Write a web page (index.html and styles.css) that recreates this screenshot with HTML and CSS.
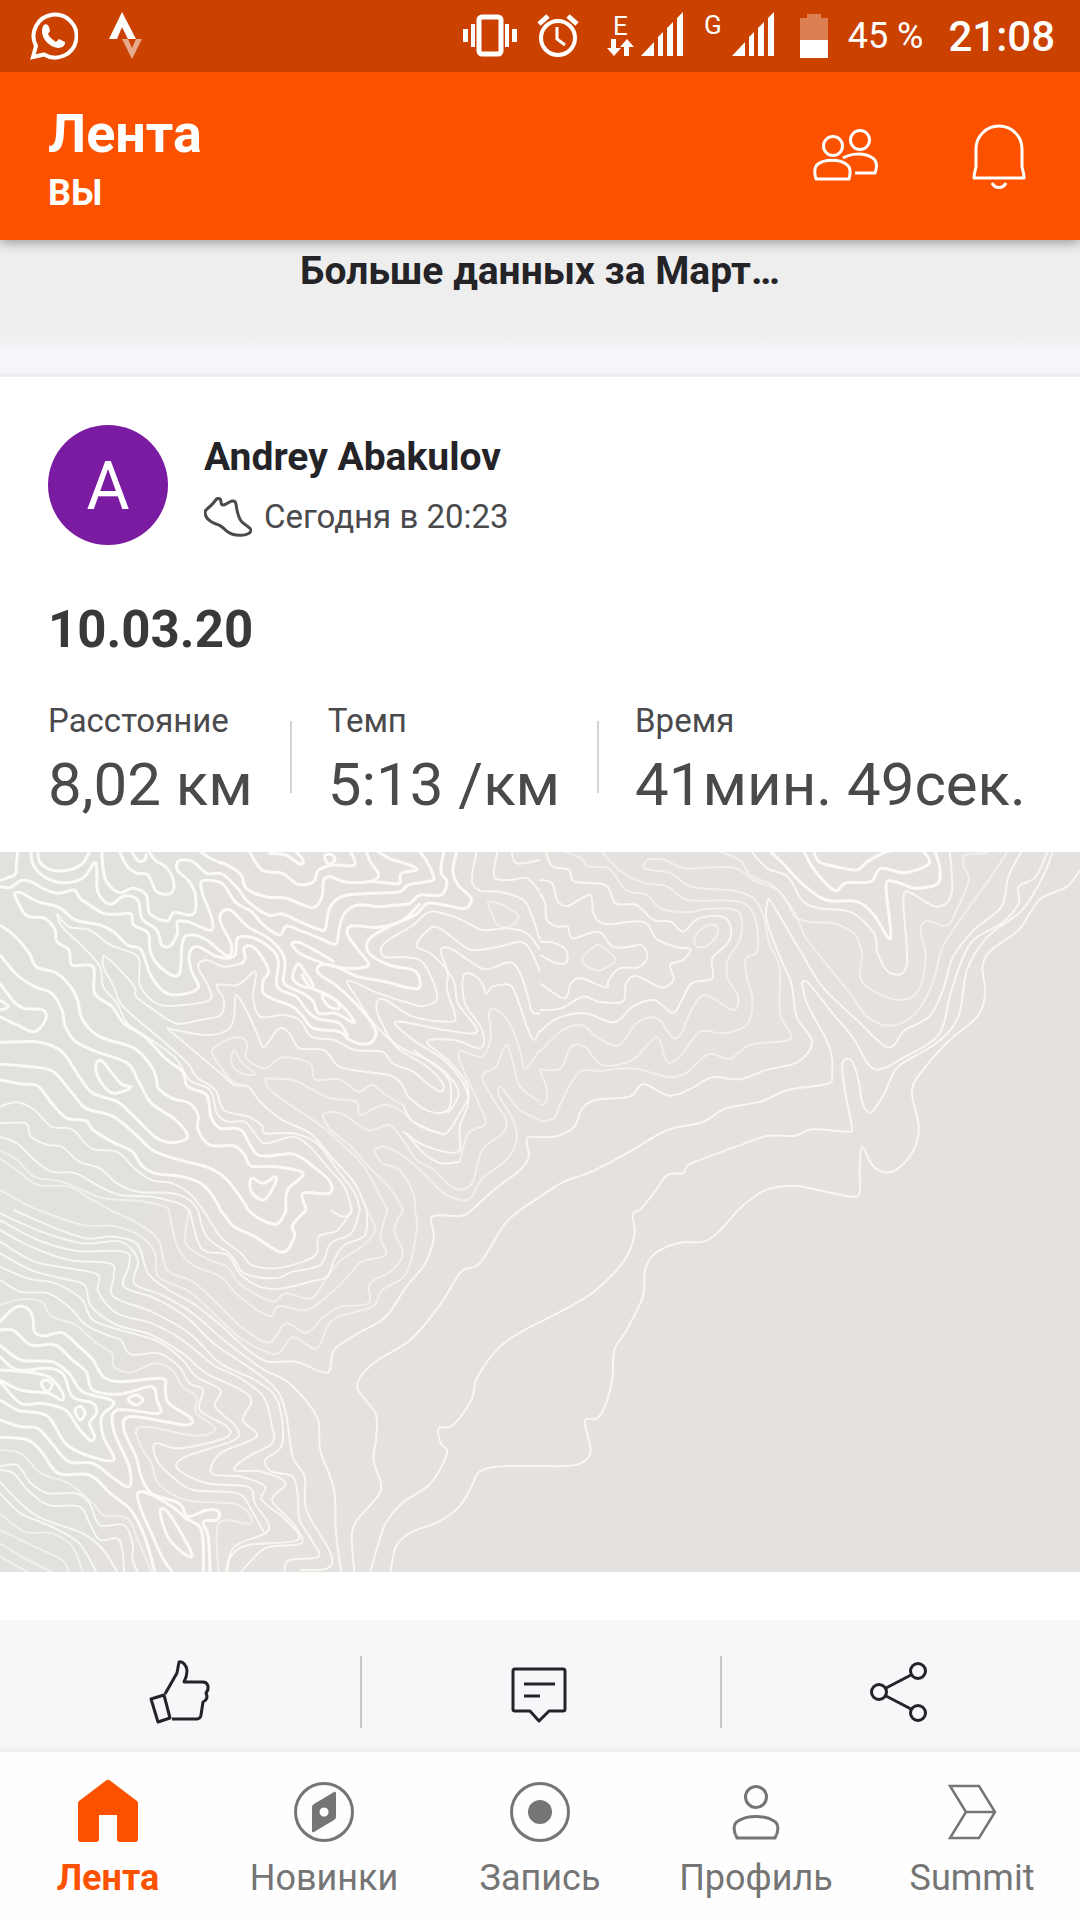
FILE: index.html
```html
<!DOCTYPE html>
<html lang="ru">
<head>
<meta charset="utf-8">
<meta name="viewport" content="width=device-width, initial-scale=1">
<title>Лента</title>
<link rel="stylesheet" href="styles.css">
</head>
<body>
<div class="status-bar">
  <div class="status-group status-apps">
    <svg width="48" height="48" viewBox="0 0 48 48" fill="none" aria-hidden="true">
      <path d="M3 45l3-11A21.500 21.500 0 1 1 14 42.500z" stroke="#fff" stroke-width="4"/>
      <path d="M13 14c2-3 5-2 6 1l1 4-2 3c2 4 5 6 8 8l3-3 6 3c1 3-3 6-7 6-9-1-17-10-16-18z" fill="#fff"/>
    </svg>
    <svg width="34" height="48" viewBox="0 0 34 48" aria-hidden="true">
      <path d="M0 27L13 0l14 27h-8l-6-12-5 12z" fill="#fff"/>
      <path d="M13 27h6l4 9 4-9h6L23 47z" fill="#fff" opacity=".55"/>
    </svg>
  </div>
  <div class="status-group">
    <svg width="54" height="48" viewBox="0 0 54 48" aria-hidden="true">
      <rect x="16" y="5" width="22" height="37" rx="3" fill="none" stroke="#fff" stroke-width="5"/>
      <path d="M0 17h5v13H0zM8 12h4v23H8zM42 12h4v23h-4zM49 17h5v13h-5z" fill="#fff"/>
    </svg>
    <svg width="50" height="48" viewBox="0 0 50 48" fill="none" stroke="#fff" stroke-width="4" aria-hidden="true">
      <circle cx="21" cy="26" r="17"/>
      <path d="M20 15v12l8 6" stroke-width="3"/>
      <path d="M2 12l9-8M40 12l-9-8" stroke-width="5"/>
    </svg>
    <svg width="77" height="72" viewBox="0 -12 77 72" fill="#fff" aria-hidden="true">
      <text class="network" x="6" y="23">E</text>
      <path d="M4 27h5v9h5l-7 8-7-8h4zM17 44h5V35h5l-7-8-7 8h4z"/>
      <path d="M34 44L47 30v14zM51 25l5-5v24h-5zM60 16l6-6v34h-6zM70 6l6-6v44h-6z"/>
    </svg>
    <svg width="76" height="72" viewBox="0 -12 76 72" fill="#fff" aria-hidden="true">
      <text class="network" x="0" y="22">G</text>
      <path d="M28 44L41 30v14zM45 25l5-5v24h-5zM54 16l6-6v34h-6zM64 6l6-6v44h-6z"/>
    </svg>
    <svg width="28" height="48" viewBox="0 0 28 48" fill="#fff" aria-hidden="true">
      <path d="M0 6h7V2h14v4h7v22H0z" opacity=".33"/>
      <path d="M0 28h28v18H0z"/>
    </svg>
    <span class="battery">45 %</span>
    <span class="clock">21:08</span>
  </div>
</div>

<header class="app-header">
  <div class="app-heading">
    <h1 class="app-title">Лента</h1>
    <p class="app-subtitle">ВЫ</p>
  </div>
  <div class="header-actions">
    <button class="icon-button" type="button" aria-label="Друзья">
      <svg width="66" height="72" viewBox="0 0 66 72" fill="none" stroke="#fff" stroke-width="3">
        <ellipse cx="20" cy="25" rx="9.500" ry="9.500"/>
        <ellipse cx="47" cy="19" rx="9.500" ry="9.500"/>
        <path d="M3 58c-2-7-2-12 2-15 7-5 21-5 28 0 5 3 5 8 3 15z" stroke-linejoin="round"/>
        <path d="M30 37c8-5 21-5 28-1 6 3 7 8 4 16H42"/>
      </svg>
    </button>
    <button class="icon-button" type="button" aria-label="Уведомления">
      <svg width="54" height="72" viewBox="0 0 54 72" fill="none" stroke="#fff" stroke-width="3">
        <path d="M4 46V28a23 23 0 0 1 46 0v18c1 4 2 7 2 11H2c0-4 1-7 2-11z" stroke-linejoin="round"/>
        <path d="M20 62c3 6 11 6 14 0"/>
      </svg>
    </button>
  </div>
</header>

<main class="feed">
  <div class="more">Больше данных за Март…</div>
  <article class="activity">
    <div class="activity-body">
      <div class="athlete">
        <div class="avatar">А</div>
        <div class="athlete-text">
          <h2 class="athlete-name">Andrey Abakulov</h2>
          <p class="athlete-time">
            <svg width="48" height="40" viewBox="0 0 48 40" fill="none" stroke="#4a4a4d" stroke-width="3" stroke-linejoin="round" aria-hidden="true">
              <path d="M11 4c2-4 6-3 6 1 0 3 2 4 5 2 5-3 9-5 10 0 1 8 2 14 6 18 4 4 10 6 9 9-2 5-16 6-23 1-5-4-7-7-12-8-8-3-11-8-11-12 0-3 4-3 10-11z"/>
            </svg>
            <span>Сегодня в 20:23</span>
          </p>
        </div>
      </div>
      <h3 class="activity-title">10.03.20</h3>
      <dl class="stats">
        <div class="stat"><dt>Расстояние</dt><dd>8,02 км</dd></div>
        <div class="stat"><dt>Темп</dt><dd>5:13 /км</dd></div>
        <div class="stat"><dt>Время</dt><dd>41мин. 49сек.</dd></div>
      </dl>
    </div>
    <svg class="map" viewBox="0 0 1080 720" preserveAspectRatio="xMidYMid slice" role="img" aria-label="Карта">
      <g data-sheet="northWest" transform="translate(0 -2) scale(.34439 .33333)"></g>
      <g data-sheet="northEast" transform="translate(540 -2) scale(.34439 .33333)"></g>
      <g data-sheet="southWest" transform="translate(0 358) scale(.34439 .33333)"></g>
      <g data-sheet="coast" transform="translate(300 248) scale(.40816 .33333)"></g>
    </svg>
    <div class="actions">
      <button class="action" type="button" aria-label="Нравится">
        <svg width="64" height="72" viewBox="0 0 64 72" fill="none" stroke="#242428" stroke-width="3" stroke-linejoin="round">
          <path d="M17 38l12-21 2-11c4-1 8 4 8 9 0 4-1 7-3 11h19c5 0 7 6 3 11 2 4 1 7-3 9l-2 13c0 2-2 4-4 4H24"/>
          <path d="M3 43l13-4 6 23-12 4z"/>
        </svg>
      </button>
      <button class="action" type="button" aria-label="Комментировать">
        <svg width="64" height="72" viewBox="0 0 64 72" fill="none" stroke="#242428" stroke-width="3" stroke-linejoin="round">
          <path d="M7 13h48a2 2 0 0 1 2 2v38a2 2 0 0 1-2 2H41L31 65 22 55H7a2 2 0 0 1-2-2V15a2 2 0 0 1 2-2z"/>
          <path d="M16 28h31M16 40h16"/>
        </svg>
      </button>
      <button class="action" type="button" aria-label="Поделиться">
        <svg width="64" height="72" viewBox="0 0 64 72" fill="none" stroke="#242428" stroke-width="3">
          <circle cx="11" cy="36" r="7.500"/><circle cx="50" cy="15" r="7.500"/><circle cx="50" cy="57" r="7.500"/>
          <path d="M18 32l25-13M18 40l25 13"/>
        </svg>
      </button>
    </div>
  </article>
</main>

<nav class="tabs">
  <a class="tab tab-current" href="#feed" aria-current="page">
    <svg width="64" height="64" viewBox="0 0 64 64" fill="#fc5200" aria-hidden="true">
      <path d="M30 1.500q2-1.500 4 0L61 22q1 1 1 2v36q0 3-3 3H44q-3 0-3-3V36H23v24q0 3-3 3H5q-3 0-3-3V24q0-1 1-2z"/>
    </svg>
    Лента
  </a>
  <a class="tab" href="#explore">
    <svg width="64" height="64" viewBox="0 0 64 64" aria-hidden="true">
      <circle cx="32" cy="33" r="28.500" fill="none" stroke="#757575" stroke-width="3"/>
      <path fill="#757575" fill-rule="evenodd" d="M20 28q0-2 2-3l20-12q2-1 2 1v24q0 2-2 3L22 53q-2 1-2-1zM32 28.500a4.500 4.500 0 1 0 .1 0z"/>
    </svg>
    Новинки
  </a>
  <a class="tab" href="#record">
    <svg width="64" height="64" viewBox="0 0 64 64" aria-hidden="true">
      <circle cx="32" cy="33" r="28.500" fill="none" stroke="#757575" stroke-width="3"/>
      <circle cx="32" cy="33" r="12" fill="#757575"/>
    </svg>
    Запись
  </a>
  <a class="tab" href="#profile">
    <svg width="64" height="64" viewBox="0 0 64 64" fill="none" stroke="#757575" stroke-width="3" stroke-linejoin="round" aria-hidden="true">
      <circle cx="32" cy="18" r="10.500"/>
      <path d="M13 59c-4-7-4-14 1-17 9-6 27-6 36 0 5 3 5 10 1 17z"/>
    </svg>
    Профиль
  </a>
  <a class="tab" href="#summit">
    <svg width="64" height="64" viewBox="0 0 64 64" fill="none" stroke="#757575" stroke-width="2.500" aria-hidden="true">
      <path d="M10 7h29l16 26-16 26H10l16-26zM26 33h29"/>
    </svg>
    Summit
  </a>
</nav>
<script src="contours.js"></script>
</body>
</html>
```
FILE: styles.css
```css
* {
  box-sizing: border-box;
}

body {
  margin: 0;
  min-height: 100vh;
  display: flex;
  flex-direction: column;
  background: #fff;
  color: #242428;
  font-family: Roboto, "Noto Sans", sans-serif;
}

h1, h2, h3, p, dl, dd {
  margin: 0;
}

svg {
  display: block;
  flex: none;
}

button {
  margin: 0;
  padding: 0;
  border: 0;
  background: none;
}

.status-bar {
  position: relative;
  z-index: 1;
  height: 72px;
  padding: 0 25px 0 30px;
  display: flex;
  align-items: center;
  justify-content: space-between;
  background: #cb4200;
  color: #fff;
}

.status-group {
  display: flex;
  align-items: center;
  gap: 20px;
}

.status-apps {
  gap: 31px;
}

.network {
  font-size: 26px;
}

.battery {
  font-size: 36px;
  white-space: nowrap;
}

.clock {
  margin-left: 5px;
  font-size: 42px;
  font-weight: 500;
}

.app-header {
  position: relative;
  min-height: 168px;
  padding: 0 54px 0 48px;
  display: flex;
  align-items: center;
  justify-content: space-between;
  background: #fc5200;
  color: #fff;
  box-shadow: 0 2px 12px rgba(0, 0, 0, .4);
}

.app-heading {
  padding-top: 10px;
}

.app-title {
  font-size: 54px;
  line-height: 64px;
  font-weight: 700;
}

.app-subtitle {
  font-size: 36px;
  line-height: 54px;
  font-weight: 700;
}

.header-actions {
  padding-top: 2px;
  display: flex;
  gap: 93px;
}

.feed {
  flex: 1;
  display: flex;
  flex-direction: column;
}

.more {
  height: 137px;
  padding-top: 8px;
  border-bottom: 4px solid #efeef4;
  background: linear-gradient(#eee 0, #eee 90px, #f5f5fa 112px);
  text-align: center;
  font-size: 39px;
  line-height: 46px;
  font-weight: 700;
}

.activity {
  flex: 1;
  display: flex;
  flex-direction: column;
}

.activity-body {
  padding: 48px 48px 23px;
}

.athlete {
  display: flex;
  align-items: flex-start;
  gap: 36px;
}

.athlete-text {
  padding-top: 4px;
}

.avatar {
  width: 120px;
  height: 120px;
  flex: none;
  border-radius: 50%;
  background: #7b1ba2;
  color: #fff;
  font-size: 66px;
  line-height: 124px;
  text-align: center;
}

.athlete-name {
  font-size: 39px;
  line-height: 56px;
  font-weight: 700;
}

.athlete-time {
  display: flex;
  align-items: center;
  gap: 12px;
  color: #4a4a4d;
  font-size: 33px;
  line-height: 64px;
}

.activity-title {
  margin-top: 51px;
  color: #39393b;
  font-size: 51px;
  line-height: 60px;
  font-weight: 700;
}

.stats {
  margin-top: 41px;
  display: flex;
  color: #4a4a4d;
}

.stat {
  white-space: nowrap;
}

.stat + .stat {
  margin-left: 37px;
  padding-left: 38px;
  background: linear-gradient(#d4d4d6, #d4d4d6) 0 20px / 2px 72px no-repeat;
}

.stat dt {
  font-size: 33px;
  line-height: 40px;
}

.stat dd {
  font-size: 60px;
  line-height: 88px;
}

.map {
  width: 100%;
  aspect-ratio: 3 / 2;
  background: linear-gradient(100deg, #e1e1dd, #e4e1de 25%);
}

.contour {
  fill: none;
  stroke: #fcfaf6;
  stroke-linejoin: round;
  vector-effect: non-scaling-stroke;
}

.contour-faint {
  stroke-width: 2px;
  stroke-opacity: .6;
}

.contour-medium {
  stroke-width: 2px;
  stroke-opacity: .85;
}

.contour-strong {
  stroke-width: 3px;
}

.actions {
  margin-top: 48px;
  min-height: 132px;
  flex: 1;
  display: flex;
  background: linear-gradient(transparent calc(100% - 6px), #ececee) #f7f7fa;
}

.action {
  flex: 1;
  padding-top: 12px;
  display: flex;
  align-items: center;
  justify-content: center;
}

.action + .action {
  background: linear-gradient(#c8c8cb, #c8c8cb) 0 36px / 2px 72px no-repeat;
}

.tabs {
  height: 168px;
  padding-top: 27px;
  display: flex;
  background: #fefefe;
}

.tab {
  flex: 1 1 0;
  display: flex;
  flex-direction: column;
  align-items: center;
  gap: 14px;
  color: #757575;
  font-size: 36px;
  line-height: 42px;
  text-decoration: none;
}

.tab-current {
  color: #fc5200;
  font-weight: 700;
}
```
FILE: contours.js
```js
// Elevation contours of the map, one "x,y x,y ..." list per line.
// A list that ends in "z" is a closed ring.
const sheets = {
  northWest: {
    strong: [
      "0,92 25,82 45,72 48,40 52,0",
      "0,110 30,112 60,92 90,95 130,118 170,130 215,120 232,145 260,165 300,190 340,193 380,192 388,225 430,250 438,310 475,360 520,373 530,275 555,255 600,270 660,318 672,285 640,215 645,185 672,182 720,230 780,265 820,310 828,350 825,400 880,430 910,455 925,490 975,490 1028,518 1005,480 960,440 900,410 875,370",
      "90,0 95,40 125,78 180,98 240,85 278,38 284,125 320,163 360,138 400,150 412,205 455,240 470,285 495,287 515,250 515,215 545,215 580,230 615,240 615,205 588,130 585,95 620,92 650,105 685,158 730,185 765,225 812,255 832,228 880,245 930,265 975,282 985,235 1000,190 1040,165 1100,170 1150,165 1190,160 1220,135 1280,135 1298,95 1280,65 1290,0",
      "110,0 115,35 150,60 200,60 240,40 262,0",
      "295,0 305,85 345,128 385,115 425,135 435,190 485,213 505,188 560,193 568,140 550,95 515,60 520,32 560,35 600,70 645,72 690,115 720,155 780,195 820,192 870,215 930,240 945,235 955,180 975,150 1010,135 1080,130 1160,125 1185,105 1240,95 1260,85 1240,35 1215,0",
      "345,0 370,50 400,70 430,75 455,125 495,130 505,100 485,55 450,30 430,0",
      "380,0 400,32 420,30 425,10",
      "575,0 620,30 660,45 700,75 715,115 770,140 830,145 880,165 912,172 935,140 940,90 960,80 1000,95 1070,95 1100,75 1075,35 1062,0",
      "722,0 760,60 820,70 865,103 910,95 925,60 970,45 1030,45 1015,0",
      "780,10 830,15 870,42 880,30 855,0",
      "945,15 965,15 972,30 958,42 945,30z",
      "1090,0 1130,25 1190,45 1210,60 1165,70 1160,100 1120,98 1080,95",
      "1328,0 1315,60 1330,105 1368,145 1350,175 1290,165 1240,160 1205,195 1120,235 1070,270 1072,310 1130,345 1200,360 1218,385 1215,415 1170,410 1120,395 1040,380 975,350 930,345 925,370 980,410 1050,480 1090,540 1085,570 1060,583 1015,570 985,545 910,535 880,500 850,470 800,450 765,430 765,390 780,365 760,320 730,288 708,295 712,325 700,345",
      "845,280 870,310 940,340 1010,355 1070,345 1040,300 1010,255 1020,228 1100,232 1170,210 1220,160",
      "845,280 870,278 930,310 970,335",
      "0,225 40,255 85,310 105,350 165,370 205,410 225,450 240,510 290,560 390,595 440,650 455,690 460,715 500,745 550,760 575,795 575,840 610,885 680,888 710,915 730,948 800,950 880,970 835,1020 830,1080",
      "0,315 50,375 100,410 150,430 180,480 190,530 220,575 280,605 370,640 405,700 440,760 510,810 545,860 500,878 450,860 390,800 340,755 270,730 230,680 180,605 120,578 60,575 0,577",
      "0,400 40,455 70,475 125,480 132,510 100,545 50,525 0,500",
      "0,450 25,470 0,480",
      "295,632 350,700 380,712 330,730 295,700 278,655z",
      "0,642 90,650 155,665 210,730 250,775 330,800 400,860 450,905 540,935 610,955 660,990 710,1060 720,1080",
      "0,690 60,702 110,708 150,760 195,805 250,812 270,840 330,878 385,905 410,945 450,970 530,980 590,1005 625,1050 640,1080",
      "730,985 765,1000 800,980 795,1010 765,1050 730,1025z",
      "40,130 75,195 130,205 160,240 165,275 200,300 210,345 270,350 275,430 325,470 360,520 420,560 480,625 530,665 545,710 600,735 612,800 640,835 700,840 750,915 850,912 910,950 958,995 955,1030 880,1030 890,1080",
      "40,130 60,128 110,155 170,172 220,210 290,225 330,245 370,285 410,300 435,370 470,420 510,435 575,415 555,360 550,310 575,290 630,320 680,318 690,265 730,262 780,290 808,330 805,410 860,440 890,480 920,505 985,520 1010,560",
      "865,342 885,365 910,410 880,410 850,385z",
      "935,435 975,450 985,475 955,470z"
    ],
    medium: [
      "0,770 50,757 100,780 150,830 210,838 265,895 340,905 390,955 440,990 500,1000 550,1030 590,1080",
      "0,820 75,820 90,860 140,885 180,890 230,935 290,955 340,1000 400,1025 500,1030 550,1050 575,1080",
      "0,860 50,880 100,930 150,965 220,970 290,1010 350,1035 440,1040 520,1060 550,1080",
      "165,190 180,230 240,290 290,350 300,410 340,460 370,520 440,570 510,625 550,690 610,720 630,790 660,815 710,815 740,850 770,880 850,860 900,890 950,950 1000,1010 1022,1080",
      "165,190 200,230 260,240 320,285 400,320 405,400 440,450 490,468 605,452 605,410 575,350 600,330 650,350 700,340",
      "300,315 330,340 390,410 395,440 440,475 510,520 570,512 640,495 650,450 630,405 690,405 742,365 735,440 755,500 820,495 870,510 905,560 970,570 1030,600 1110,605 1140,640 1200,665 1240,700 1280,725 1285,700 1240,650 1150,590 1100,500 1095,455 1120,450 1200,500 1310,515 1320,490 1298,420 1300,370 1280,300 1310,297 1360,330 1410,358 1480,337 1510,370 1530,430 1545,485 1568,490",
      "300,315 300,350 330,410 350,460 400,510 470,570 545,640 570,680 625,720 650,780 720,800 760,825 770,850 850,850 920,880 980,960 1030,1030 1045,1080",
      "485,535 600,555 660,540 680,500 685,435 720,490 750,560 768,590 810,535 840,550 870,595 940,600 985,650 1060,665 1130,675 1165,700 1190,745 1250,785 1300,780 1310,720 1290,670 1200,600",
      "485,535 560,600 640,670 680,705 720,710 760,760 820,810 900,850 970,930 1030,1000 1065,1080",
      "1180,850 1230,910 1280,940 1335,935",
      "1170,765 1200,815 1280,850 1305,840 1335,790 1360,740 1350,690 1300,630 1240,575 1320,570 1395,595 1400,540 1350,460 1345,380 1370,372 1400,400 1412,432 1430,410 1480,405 1500,440 1530,530 1550,570 1568,540",
      "1568,300 1530,250 1470,235 1400,240 1330,205 1250,185 1200,225 1115,280 1115,320 1180,322 1230,340 1270,440 1230,468 1190,460 1100,430 1010,392 1040,450 1085,520 1160,590 1260,640 1320,700 1330,740 1300,790",
      "1568,365 1540,300 1510,275 1450,290 1370,300 1320,268 1260,230 1210,285 1250,310 1290,350 1320,400 1330,460 1385,545 1290,540 1150,515 1200,570 1300,640 1360,740 1335,830 1330,905 1240,890 1170,845",
      "1385,0 1370,90 1395,122 1450,125 1520,150 1545,200 1568,270",
      "1445,0 1435,80 1480,90 1530,85 1568,125",
      "1485,0 1500,40 1568,30",
      "1510,1080 1568,1040",
      "1370,1080 1440,1015 1510,960 1535,920 1530,865 1568,862"
    ],
    faint: [
      "0,900 50,930 100,980 180,995 240,1020 300,1045 420,1055 480,1070 490,1080",
      "0,925 60,970 110,1005 200,1010 260,1045 320,1080",
      "0,1020 70,1060 110,1080",
      "680,600 700,635 740,672 700,670 672,640z",
      "700,705 670,690 640,650 615,605 640,580 690,562 718,580 715,625 770,655 820,622 900,640 915,688 985,688 1040,725 1080,705 1120,735 1170,765",
      "770,685 850,690 900,715 960,745 1035,755 1045,795 1110,765 1160,780 1220,830 1290,855",
      "770,685 780,715 850,770 930,825 1000,890 1050,940 1085,1000 1125,1080",
      "935,795 960,785 1000,795 1070,840 1130,825 1170,870 1210,930 1260,960 1320,1015 1370,1000 1400,900 1460,850 1470,810 1440,760 1400,680 1440,650 1470,585 1490,640 1510,710 1568,755",
      "935,795 960,840 1020,890 1070,950 1120,1000 1150,1040 1170,1080",
      "1085,900 1120,890 1180,925 1240,980 1290,1030 1340,1050 1370,1040 1400,985 1470,930 1500,870 1490,810 1450,740 1450,710 1470,730 1510,780 1568,810",
      "1085,900 1110,940 1160,960 1200,1030 1205,1080",
      "1335,935 1360,850 1410,820 1390,760 1330,610 1400,620 1425,560 1420,490 1440,478 1480,520 1510,600 1525,655 1568,600",
      "1418,155 1470,170 1505,200 1480,230 1445,225 1430,195z"
    ]
  },
  northEast: {
    strong: [
      "665,0 710,45 760,100 830,150 920,155 970,195 1018,265 1005,110 1030,95 1090,115 1155,100 1160,50 1145,0",
      "765,0 790,50 830,100 860,122 890,98 960,95 990,55 1060,68 1130,40 1110,0",
      "793,0 810,35 860,50 920,60 950,35 1000,8 1030,0"
    ],
    medium: [
      "15,0 35,48 85,60 100,95 190,105 220,160 280,165 330,210 380,215 415,245 460,205 530,200 555,235 545,280 500,325 500,385 440,400 410,455 385,488 330,450 270,470 215,517 130,490 50,505 0,545",
      "0,90 35,100 50,150 80,168 145,135 155,190 190,222 300,215 340,268 400,292 437,297 415,330 378,345 388,390 350,412 280,378 250,400 240,455 170,455 125,440 60,475 0,480",
      "0,130 15,160 20,210 50,230 80,230 95,265 170,245 210,290 260,290 295,285 312,320 285,352 230,355 200,390 190,412 120,385 90,400 70,445 0,400",
      "0,275 40,278 75,300 78,335 50,340 0,315",
      "610,0 660,55 720,80 760,150 810,175 900,185 970,250 980,310 1018,370 1065,345 1055,150 1075,128 1150,170 1195,130 1190,0",
      "662,145 680,170 760,310 820,410 920,510 1010,592 1060,540 1130,500 1170,420 1200,320 1260,240 1340,170 1360,80 1400,0",
      "662,145 658,210 700,330 730,400 745,500 790,575 750,635 650,662 580,688 500,682 440,715 375,737 300,703 260,740 160,750 120,780 100,830 50,858 0,862",
      "760,395 780,400 850,490 910,565 970,657 1060,620 1160,550 1195,420 1250,280 1340,220 1390,160 1390,110 1440,80 1475,0",
      "760,395 775,460 840,590 848,680 830,703 720,720 640,755 540,775 470,817 370,840 260,905 150,965 70,995 0,1040",
      "1490,0 1460,80 1400,180 1300,260 1240,360 1215,500 1150,580 1040,650 1000,730 960,788 935,755 925,690 905,632 878,640 885,720 905,830 890,845 790,838 740,857 660,858 570,890 490,920 430,945 415,970 370,975 330,1030 290,1080",
      "1568,60 1530,110 1450,150 1390,240 1310,300 1285,350 1293,430 1270,500 1190,570 1120,650 1080,720 1100,830 1085,900 1040,955 1000,967 965,945 935,890 928,960 928,1030 900,1040 830,1025 740,1008 660,1018 610,1050 575,1080"
    ],
    faint: [
      "60,0 120,25 140,50 200,55 250,120 310,135 350,175 430,187 480,177 560,178 585,205 580,270 545,330 545,385 575,440 560,480 480,435 440,480 410,550 385,562 340,505 280,520 230,585 170,565 120,525 60,545 0,605",
      "175,0 230,60 300,98 370,110 430,150 560,152 610,175 630,230 630,305 598,325 600,380 617,450 600,525 530,550 465,545 410,615 370,637 345,565 320,575 265,632 180,645 130,590 90,590 60,655 0,658",
      "1300,10 1235,15 1230,50 1245,90 1210,180 1180,228 1125,212 1105,240 1120,320 1100,420 1050,450 980,430 930,385 935,310 910,250 850,220 780,215 740,200 720,160 690,120 620,90 570,55 500,52 420,55 360,30 320,28 303,42 310,58 380,70 440,110 560,122 620,145 650,200 665,280 695,350 697,490 728,550 715,572 610,585 550,627 490,612 430,665 385,682 330,670 270,655 170,662 120,662 90,700 60,760 40,805 0,815",
      "510,0 580,30 610,75 680,110 740,190 770,260 830,340 900,430 950,500 1020,527 1090,490 1140,400 1170,290 1240,180 1310,80 1360,0",
      "165,285 185,295 218,325 205,345 165,362 122,330z",
      "490,225 515,230 512,260 480,290 450,285 455,250z",
      "0,660 20,720 15,760 0,762"
    ]
  },
  southWest: {
    strong: [
      "720,0 760,30 805,42 832,0",
      "640,0 680,50 740,80 820,127 855,80 850,45 890,0",
      "0,335 40,295 75,292 95,320 100,365 130,378 180,368 230,410 270,450 300,500 350,515 470,505 480,540 490,580 555,625 545,645 480,635 375,620 360,660 395,740 410,800 440,850 520,880 545,920 600,900 635,905 630,930 590,935 605,980 610,1086",
      "0,360 40,362 90,405 160,405 210,450 250,485 270,540 350,552 440,530 455,570 460,610 340,600 330,660 375,770 375,830 330,805 270,760 200,755 150,700 110,655 60,650 0,630",
      "0,405 60,450 150,455 200,490 240,545 330,575 295,620 300,680 330,750 250,735 190,700 140,620 80,605 50,600 0,570",
      "0,440 50,480 140,475 185,495 210,560 270,580 280,610 260,640 275,680 260,690 225,650 190,600 120,580 60,580 0,515",
      "0,480 70,485 140,500 180,545 180,570 140,550 60,540 0,510",
      "120,520 135,510 152,525 135,545z",
      "218,600 235,590 247,610 232,630z",
      "372,568 395,555 415,570 395,585z",
      "590,1086 590,1000 580,950 540,925 500,890 430,850 400,850 410,900 440,970 470,1040 500,1086",
      "465,905 490,910 555,1025 540,1035 490,985z",
      "0,682 80,690 120,725 170,790 260,795 320,850 380,900 420,980 450,1086"
    ],
    medium: [
      "590,0 640,80 700,130 730,165 800,175 880,155 920,130 925,80 980,60 1022,0",
      "960,0 990,18 1015,15 1020,0",
      "575,0 600,80 670,135 710,190 800,205 850,185 930,165 960,100 1020,70 1045,0",
      "550,0 575,95 600,125 660,135 700,195 760,232 820,235 900,215 950,200 970,150 1000,105 1060,75 1065,0",
      "0,60 90,110 200,150 320,160 330,200 330,260 440,305 550,370 640,460 740,510 805,570 820,700 770,750 790,785 850,800 865,860 870,930 905,990 925,1040 840,1050 825,1086",
      "0,95 100,155 200,175 285,195 285,245 340,310 440,340 530,390 620,465 690,500 765,560 790,650 790,700 720,740 680,780 760,785 830,820 790,870 850,940 875,1000 770,1015 700,1086",
      "0,130 90,180 180,205 245,225 265,290 340,345 440,375 530,430 600,490 700,540 730,575 705,630 745,680 640,730 615,790 700,800 770,830 760,870 830,930 865,990 720,1005 670,1040 655,1086",
      "0,170 80,205 160,220 235,265 270,330 350,360 460,395 530,450 570,500 640,540 625,590 685,650 680,690 540,740 515,775 600,820 720,830 740,880 780,960 680,1010 660,1086",
      "0,210 60,245 140,250 200,290 250,345 310,375 350,390 380,433 460,430 520,470 550,520 590,540 580,600 660,650 660,680 580,705 510,715 450,700 455,750 500,800 560,840 690,850 730,900 765,965",
      "0,770 50,765 90,820 140,850 220,850 260,880 290,945 360,945 385,1000 385,1050 400,1086",
      "0,780 40,790 80,840 140,885 230,890 260,940 290,990 340,985 355,1020 360,1086",
      "0,815 60,880 120,925 240,970 300,1020 340,1086",
      "0,850 60,910 150,950 230,1000 280,1086",
      "0,10 120,65 240,100 350,95 400,150 390,220 470,255 560,310 650,390 760,475 840,520 920,620 930,720 970,840 975,960 990,1086",
      "0,30 110,90 220,122 360,125 375,165 360,230 450,265 540,320 620,400 720,470 800,535 830,610 850,740 885,800 890,900 960,1030 950,1075 870,1080",
      "40,0 150,50 250,85 330,80 400,105 430,190 490,240 560,280 640,345 720,420 780,455 860,455 950,488 970,420 1040,370 1120,320 1180,230 1235,160 1260,80 1255,20 1340,18 1370,0"
    ],
    faint: [
      "490,0 515,110 560,165 640,200 690,255 780,318 810,288 890,300 960,250 1010,200 1050,155 1120,135 1105,80 1125,0",
      "550,0 540,100 610,150 660,170 700,225 790,275 830,250 905,265 950,200 990,150 1050,110 1090,60 1065,0",
      "320,0 400,40 460,90 485,180 560,215 640,290 700,350 780,398 830,340 890,368 940,320 990,290 1070,280 1075,220 1140,180 1170,130 1145,60 1170,0",
      "110,0 240,45 330,48 410,80 450,130 460,200 550,245 620,310 700,385 800,432 850,382 920,415 965,330 1080,290 1110,240 1180,190 1210,60 1205,0",
      "0,285 60,268 120,275 150,320 220,345 280,400 325,430 330,470 380,487 450,460 500,480 530,530 570,560 570,610 625,655 570,677 410,650 405,700 440,760 460,820 540,870 690,885 728,940 635,940 635,1086",
      "0,720 60,730 120,790 200,820 270,880 300,915 370,925 400,990 430,1060 440,1086",
      "0,910 70,965 150,970 210,1010 240,1086",
      "0,960 100,1010 180,1050 200,1086",
      "0,1000 80,1050 150,1086",
      "0,1040 80,1086"
    ]
  },
  coast: {
    strong: [],
    medium: [
      "539,330 500,375 440,490 395,515 340,620 270,720 180,790 140,860 185,940 187,1010 180,1080 198,1150 190,1190 140,1260 127,1310 133,1416",
      "833,330 815,345 820,400 795,480 720,575 630,640 550,690 490,740 435,830 420,900 375,975 340,985 345,1030 360,1060 320,1150 250,1210 210,1270 190,1340 172,1416",
      "1073,330 1030,390 990,425 930,428 870,460 845,510 840,590 800,690 770,750 765,840 745,925 725,957 698,963 712,1050 695,1085 650,1098 500,1099 440,1115 420,1160 390,1220 340,1265 270,1298 235,1340 222,1416"
    ],
    faint: []
  }
};

// Catmull-Rom spline through the points, written as cubic Bezier segments.
function smoothPath(line) {
  const closed = line.endsWith("z");
  const pts = line.replace("z", "").split(" ").map(p => p.split(",").map(Number));
  const n = pts.length;
  const at = i => closed ? pts[(i + n) % n] : pts[Math.max(0, Math.min(n - 1, i))];
  let d = "M" + pts[0].join(" ");
  for (let i = 0; i < (closed ? n : n - 1); i++) {
    const [a, b, c, e] = [at(i - 1), at(i), at(i + 1), at(i + 2)];
    d += "C" + [
      b[0] + (c[0] - a[0]) / 6, b[1] + (c[1] - a[1]) / 6,
      c[0] - (e[0] - b[0]) / 6, c[1] - (e[1] - b[1]) / 6,
      c[0], c[1]
    ].map(v => v.toFixed(1)).join(" ");
  }
  return closed ? d + "Z" : d;
}

document.querySelectorAll("[data-sheet]").forEach(group => {
  for (const [weight, lines] of Object.entries(sheets[group.dataset.sheet])) {
    for (const line of lines) {
      const path = document.createElementNS("http://www.w3.org/2000/svg", "path");
      path.setAttribute("class", "contour contour-" + weight);
      path.setAttribute("d", smoothPath(line));
      group.append(path);
    }
  }
});
```
